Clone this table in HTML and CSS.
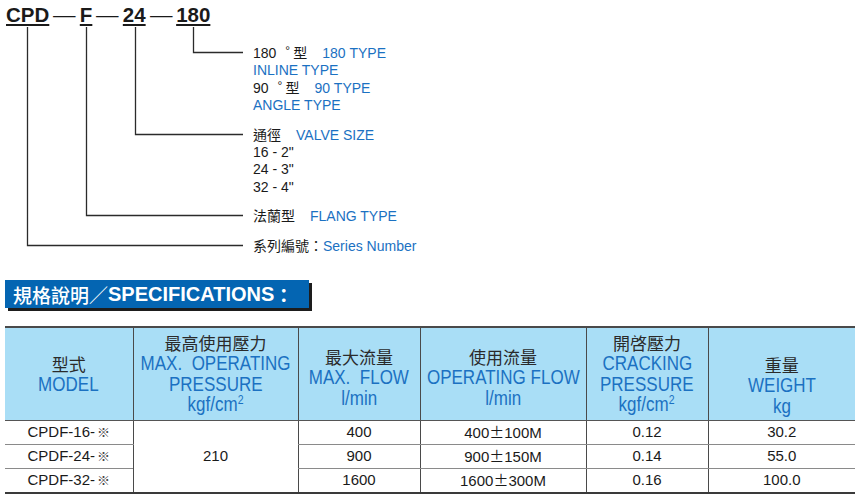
FILE: index.html
```html
<!DOCTYPE html>
<html>
<head>
<meta charset="utf-8">
<link rel="stylesheet" href="styles.css">
</head>
<body>
<div class="diagram">
  <div class="code">
    <span class="seg">CPD</span><span class="dash">—</span><span class="seg">F</span><span class="dash">—</span><span class="seg">24</span><span class="dash">—</span><span class="seg">180</span>
  </div>
  <svg class="lines" width="260" height="260" viewBox="0 0 260 260">
    <path d="M27.5 27 V245.5 H243 M86.5 27 V215.5 H243 M135.5 27 V134.5 H243 M193.5 27 V52.5 H243" fill="none" stroke="#2b2b2b" stroke-width="1.3"/>
  </svg>
  <div class="legend">
    <div class="group">
      <div>180<span class="deg">°</span>型<span class="gap"></span><span class="en">180 TYPE</span></div>
      <div class="en">INLINE TYPE</div>
      <div>90<span class="deg">°</span>型<span class="gap"></span><span class="en">90 TYPE</span></div>
      <div class="en">ANGLE TYPE</div>
    </div>
    <div class="group">
      <div>通徑<span class="gap"></span><span class="en">VALVE SIZE</span></div>
      <div>16 - 2"</div>
      <div>24 - 3"</div>
      <div>32 - 4"</div>
    </div>
    <div class="group">
      <div>法蘭型<span class="gap"></span><span class="en">FLANG TYPE</span></div>
    </div>
    <div class="group">
      <div>系列編號：<span class="en">Series Number</span></div>
    </div>
  </div>
</div>

<div class="specbar"><span class="zh">規格說明／</span><span class="b">SPECIFICATIONS</span><span class="zh colon">：</span></div>

<table class="spec">
  <colgroup>
    <col class="c1"><col class="c2"><col class="c3"><col class="c4"><col class="c5"><col class="c6">
  </colgroup>
  <thead>
    <tr>
      <th><div class="zh">型式</div><div class="en"><span>MODEL</span></div></th>
      <th><div class="zh">最高使用壓力</div><div class="en"><span>MAX.&nbsp; OPERATING</span></div><div class="en"><span>PRESSURE</span></div><div class="en"><span>kgf/cm<sup>2</sup></span></div></th>
      <th class="low"><div class="zh">最大流量</div><div class="en"><span>MAX.&nbsp; FLOW</span></div><div class="en"><span>l/min</span></div></th>
      <th class="low"><div class="zh">使用流量</div><div class="en"><span>OPERATING FLOW</span></div><div class="en"><span>l/min</span></div></th>
      <th><div class="zh">開啓壓力</div><div class="en"><span>CRACKING</span></div><div class="en"><span>PRESSURE</span></div><div class="en"><span>kgf/cm<sup>2</sup></span></div></th>
      <th class="lower"><div class="zh">重量</div><div class="en"><span>WEIGHT</span></div><div class="en"><span>kg</span></div></th>
    </tr>
  </thead>
  <tbody>
    <tr><td>CPDF-16-<span class="mark">※</span></td><td rowspan="3">210</td><td>400</td><td>400<span class="pm">±</span>100M</td><td>0.12</td><td>30.2</td></tr>
    <tr><td>CPDF-24-<span class="mark">※</span></td><td>900</td><td>900<span class="pm">±</span>150M</td><td>0.14</td><td>55.0</td></tr>
    <tr><td>CPDF-32-<span class="mark">※</span></td><td>1600</td><td>1600<span class="pm">±</span>300M</td><td>0.16</td><td>100.0</td></tr>
  </tbody>
</table>
</body>
</html>
```

FILE: styles.css
```css
html, body {
  margin: 0;
  padding: 0;
  background: #ffffff;
}
body {
  font-family: "Liberation Sans", Arial, "Noto Sans CJK TC", sans-serif;
  color: #222;
  width: 862px;
  height: 500px;
  overflow: hidden;
}
.diagram {
  position: relative;
  height: 272px;
}
.code {
  display: flex;
  align-items: baseline;
  padding: 4px 0 0 6px;
  height: 22px;
  font-weight: bold;
  font-size: 20.5px;
  line-height: 22px;
  color: #1a1a1a;
}
.code .seg {
  text-decoration: underline;
  text-decoration-thickness: 2px;
  text-underline-offset: 2px;
}
.code .dash {
  font-weight: normal;
  margin: 0 5px 0 5px;
  display: inline-block;
  transform: scaleX(1.1);
}
.lines {
  position: absolute;
  left: 0;
  top: 0;
}
.legend {
  margin: 19px 0 0 253px;
  font-size: 14px;
  line-height: 17.3px;
  color: #1a1a1a;
}
.legend .group > div {
  height: 17.3px;
  white-space: nowrap;
}
.legend .group + .group {
  margin-top: 12.5px;
}
.legend .en {
  color: #1b71c2;
}
.legend .deg {
  font-size: 12px;
  position: relative;
  top: -3px;
  margin: 0 3px 0 9px;
}
.legend .gap {
  display: inline-block;
  width: 15px;
}
.specbar {
  margin: 8px 0 0 5px;
  width: 304px;
  height: 28px;
  background: #0465b2;
  box-shadow: 3px 3px 0 #1d1d1d;
  color: #fff;
  display: flex;
  align-items: center;
  padding-left: 8px;
  box-sizing: border-box;
  white-space: nowrap;
}
.specbar .zh {
  font-family: "Noto Sans CJK TC", sans-serif;
  font-size: 19px;
  font-weight: 500;
}
.specbar .b {
  font-family: "Liberation Sans", Arial, sans-serif;
  font-size: 20px;
  font-weight: bold;
}
.specbar .colon {
  font-weight: bold;
}
.spec {
  margin: 18px 0 0 5px;
  width: 850px;
  border-collapse: collapse;
  table-layout: fixed;
}
.spec col.c1 { width: 128px; }
.spec col.c2 { width: 165px; }
.spec col.c3 { width: 122px; }
.spec col.c4 { width: 166px; }
.spec col.c5 { width: 122px; }
.spec col.c6 { width: 147px; }
.spec th {
  background: #a9def6;
  height: 93px;
  padding: 0;
  box-sizing: border-box;
  vertical-align: middle;
  font-weight: normal;
  border-top: 2px solid #4a4a4a;
  border-bottom: 1.5px solid #555;
  border-left: 1.5px solid #4a4a4a;
}
.spec th.low {
  padding-top: 8px;
}
.spec th.lower {
  padding-top: 24px;
}
.spec th:first-child,
.spec td:first-child {
  border-left: none;
}
.spec th .zh {
  font-family: "Noto Sans CJK TC", sans-serif;
  font-size: 17px;
  line-height: 20px;
  color: #2a2a2a;
}
.spec th .en {
  display: flex;
  justify-content: center;
  font-family: "Liberation Sans", Arial, sans-serif;
  font-size: 21px;
  line-height: 20.5px;
  height: 20.5px;
  color: #1b71c2;
  white-space: nowrap;
}
.spec th .en span {
  display: block;
  flex: none;
  transform: scaleX(0.81);
  transform-origin: center;
}
.spec th sup {
  font-size: 13px;
  vertical-align: 7px;
  line-height: 0;
}
.spec td {
  text-align: center;
  font-size: 15px;
  height: 22px;
  padding: 0;
  line-height: 22px;
  color: #1a1a1a;
  border-left: 1.5px solid #4a4a4a;
  border-bottom: 1.5px solid #8a8a8a;
}
.spec tbody tr:last-child td,
.spec td[rowspan] {
  border-bottom: 2px solid #3a3a3a;
}
.spec td .pm {
  font-family: "Noto Sans CJK TC", sans-serif;
  font-size: 15px;
}
.spec td .mark {
  font-family: "Noto Sans CJK TC", sans-serif;
  font-size: 13px;
  color: #444;
  margin-left: 2px;
}
```
